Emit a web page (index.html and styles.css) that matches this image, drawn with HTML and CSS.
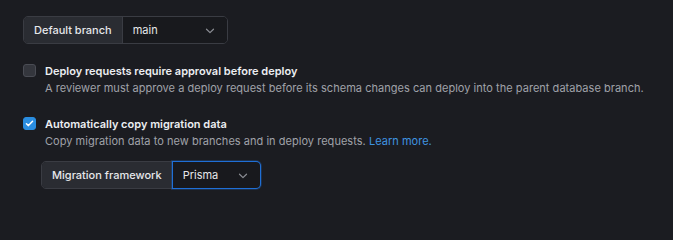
FILE: index.html
```html
<!DOCTYPE html>
<html>
<head>
<meta charset="utf-8">
<link rel="stylesheet" href="styles.css">
</head>
<body>
<div class="page">
  <div class="group">
    <span class="group-label">Default branch</span>
    <span class="select select-branch">
      <span>main</span>
      <svg class="chev" width="10" height="6" viewBox="0 0 10 6"><path d="M1.5 1.2l3.5 3.4 3.5-3.4" fill="none" stroke="#8b8d94" stroke-width="1.2" stroke-linecap="round" stroke-linejoin="round"/></svg>
    </span>
  </div>

  <div class="option opt1">
    <span class="checkbox"></span>
    <div class="option-text">
      <div class="option-title">Deploy requests require approval before deploy</div>
      <div class="option-desc">A reviewer must approve a deploy request before its schema changes can deploy into the parent database branch.</div>
    </div>
  </div>

  <div class="option opt2">
    <span class="checkbox checked">
      <svg width="9" height="7" viewBox="0 0 10 8"><path d="M1.5 4.2l2.3 2.2L8.5 1.5" fill="none" stroke="#fff" stroke-width="1.7" stroke-linecap="round" stroke-linejoin="round"/></svg>
    </span>
    <div class="option-text">
      <div class="option-title">Automatically copy migration data</div>
      <div class="option-desc">Copy migration data to new branches and in deploy requests. <a class="link">Learn more.</a></div>
      <div class="group sub">
        <span class="group-label">Migration framework</span>
        <span class="select select-fw focused">
          <span>Prisma</span>
          <svg class="chev" width="10" height="6" viewBox="0 0 10 6"><path d="M1.5 1.2l3.5 3.4 3.5-3.4" fill="none" stroke="#8b8d94" stroke-width="1.2" stroke-linecap="round" stroke-linejoin="round"/></svg>
        </span>
      </div>
    </div>
  </div>
</div>
</body>
</html>
```

FILE: styles.css
```css
html, body {
  margin: 0;
  padding: 0;
  background: #1b1c21;
}
body {
  font-family: Inter, "Noto Sans", sans-serif;
  font-size: 11px;
  color: #e6e7ea;
}
.page {
  padding: 16px 23px;
}
.group {
  display: inline-flex;
  height: 28px;
  border: 1px solid #3a3c43;
  border-radius: 5px;
  box-sizing: border-box;
}
.group-label {
  display: flex;
  align-items: center;
  padding: 0 10px;
  background: #2a2c32;
  border-right: 1px solid #3a3c43;
  border-radius: 4px 0 0 4px;
  color: #e6e7ea;
  font-weight: 500;
}
.select {
  display: flex;
  align-items: center;
  justify-content: space-between;
  padding: 0 12px 0 10px;
  color: #e6e7ea;
  background: #18191d;
  border-radius: 0 4px 4px 0;
  box-sizing: border-box;
}
.select-branch { width: 104px; }
.select-fw { width: 87px; }
.focused {
  box-shadow: 0 0 0 1px #1f6fd6, 0 0 0 2px rgba(31,111,214,0.25);
}
.chev { margin-top: 1px; }
.option {
  display: flex;
  gap: 9px;
}
.opt1 { margin-top: 19px; }
.opt2 { margin-top: 19px; }
.checkbox {
  flex: none;
  width: 13px;
  height: 13px;
  margin-top: 1px;
  border: 1px solid #4a4c54;
  background: #34363d;
  border-radius: 3px;
  box-sizing: border-box;
  display: flex;
  align-items: center;
  justify-content: center;
}
.checkbox.checked {
  background: #2a8de0;
  border-color: #2a8de0;
}
.option-title {
  font-weight: 600;
  line-height: 17px;
  color: #eceef1;
}
.option-desc {
  line-height: 17px;
  color: #a0a2a9;
  letter-spacing: 0.03px;
}
.link { color: #3f93e0; }
.sub {
  margin-top: 11px;
  margin-left: -4px;
}
```
